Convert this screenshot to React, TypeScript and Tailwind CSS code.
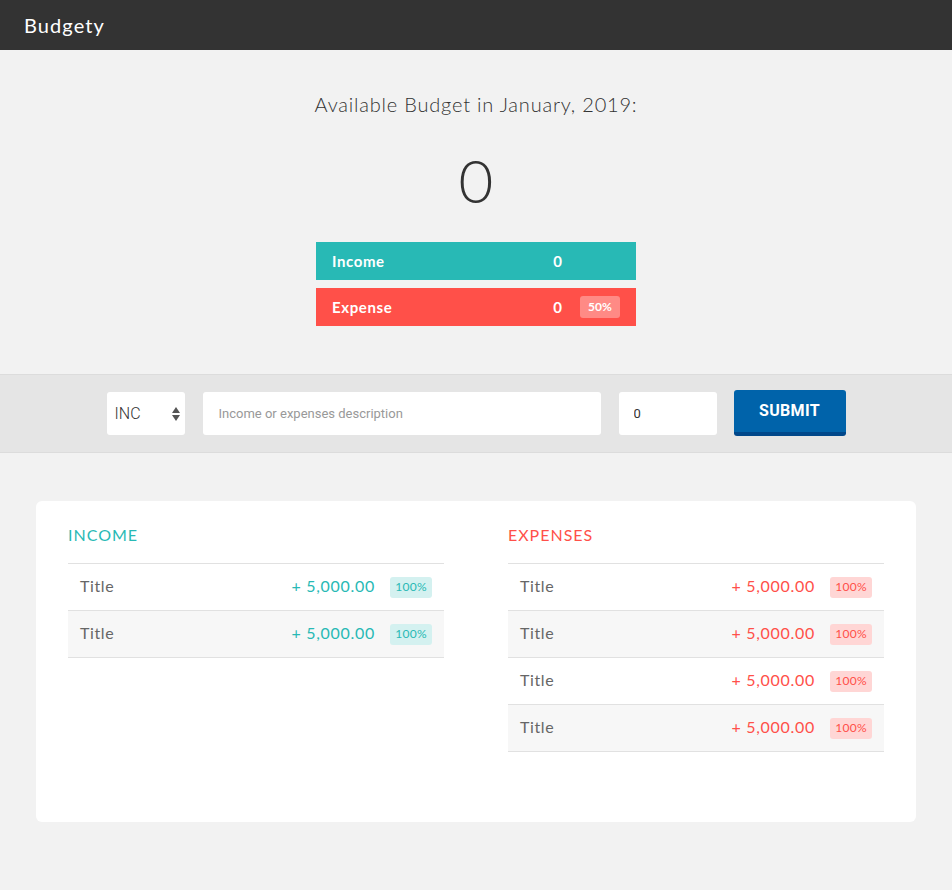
import React, { useState } from "react"

type Item = { title: string; value: string; pct: string }

const incomes: Item[] = [
  { title: "Title", value: "+ 5,000.00", pct: "100%" },
  { title: "Title", value: "+ 5,000.00", pct: "100%" },
]

const expenses: Item[] = [
  { title: "Title", value: "+ 5,000.00", pct: "100%" },
  { title: "Title", value: "+ 5,000.00", pct: "100%" },
  { title: "Title", value: "+ 5,000.00", pct: "100%" },
  { title: "Title", value: "+ 5,000.00", pct: "100%" },
]

function List({
  heading,
  items,
  kind,
}: {
  heading: string
  items: Item[]
  kind: "inc" | "exp"
}) {
  const isInc = kind === "inc"
  return (
    <div className="w-[376px]">
      {/* Column heading */}
      <h2
        className={`h-5 text-[16px] leading-5 tracking-[1px] mb-[18px] ${
          isInc ? "text-[#28b9b5]" : "text-[#ff5049]"
        }`}
      >
        {heading}
      </h2>
      <div className="border-t border-[#e1e1e1]">
        {items.map((item, i) => (
          <div
            key={i}
            className={`h-[47px] flex items-center px-3 border-b border-[#e1e1e1] ${
              i % 2 === 1 ? "bg-[#f7f7f7]" : "bg-white"
            }`}
          >
            <span className="flex-1 text-[16px] text-[#666] tracking-[0.6px] -mt-[2px]">
              {item.title}
            </span>
            <span
              className={`text-[16px] tracking-[0.7px] -mt-[2px] ${
                isInc ? "text-[#28b9b5]" : "text-[#ff5049]"
              }`}
            >
              {item.value}
            </span>
            <span
              className={`ml-[15px] w-[42px] h-[21px] rounded-[3px] flex items-center justify-center text-[12px] tracking-[0.3px] ${
                isInc
                  ? "text-[#28b9b5] bg-[#d4f1f0]"
                  : "text-[#ff5049] bg-[#ffd6d5]"
              }`}
            >
              {item.pct}
            </span>
          </div>
        ))}
      </div>
    </div>
  )
}

export default function App() {
  const [type, setType] = useState("inc")
  const [desc, setDesc] = useState("")
  const [value, setValue] = useState("0")

  return (
    <div
      className="min-h-screen bg-[#f2f2f2] text-[#333]"
      style={{ fontFamily: "Lato, 'Open Sans', sans-serif" }}
    >
      {/* Header */}
      <header className="h-[50px] bg-[#333] flex items-center px-6">
        <span className="text-white text-[20px] tracking-[1.1px]">Budgety</span>
      </header>

      {/* Budget overview */}
      <section className="flex flex-col items-center pt-[40px] pb-[48px]">
        <div className="text-[20px] leading-7 font-light tracking-[0.8px]">
          Available Budget in January, 2019:
        </div>
        <div className="mt-[32px] text-[60px] leading-none font-light">0</div>
        <div className="mt-[32px] w-[320px] flex flex-col gap-2">
          <div className="h-[38px] bg-[#28b9b5] text-white flex items-center pl-4 pr-4">
            <span className="flex-1 text-[15px] font-bold tracking-[0.6px]">Income</span>
            <span className="text-[15px] font-bold">0</span>
            <span className="ml-[18px] w-[40px]"></span>
          </div>
          <div className="h-[38px] bg-[#ff5049] text-white flex items-center pl-4 pr-4">
            <span className="flex-1 text-[15px] font-bold tracking-[0.6px]">Expense</span>
            <span className="text-[15px] font-bold">0</span>
            <span className="ml-[18px] w-[40px] h-[22px] rounded-[3px] bg-[#ff8a85] flex items-center justify-center text-[12px] font-bold">
              50%
            </span>
          </div>
        </div>
      </section>

      {/* Add form */}
      <section
        className="h-[79px] bg-[#e5e5e5] border-t border-b border-[#dcdcdc] flex items-center justify-center"
        style={{ fontFamily: "Roboto, 'Liberation Sans', sans-serif" }}
      >
        <div className="relative w-[78px] h-[43px]">
          <select
            value={type}
            onChange={(e) => setType(e.target.value)}
            className="appearance-none w-full h-full bg-white rounded-[3px] pl-2 text-[16px] font-light text-[#333] outline-none"
          >
            <option value="inc">INC</option>
            <option value="exp">EXP</option>
          </select>
          <svg
            className="absolute right-[5px] top-[15px] pointer-events-none"
            width="8"
            height="14"
            viewBox="0 0 8 14"
          >
            <path d="M4 0 L8 6 L0 6 Z" fill="#555" />
            <path d="M4 14 L8 8 L0 8 Z" fill="#555" />
          </svg>
        </div>
        <input
          value={desc}
          onChange={(e) => setDesc(e.target.value)}
          placeholder="Income or expenses description"
          className="ml-[18px] w-[398px] h-[43px] bg-white rounded-[3px] px-4 text-[13px] text-[#333] placeholder:text-[#999] outline-none"
        />
        <input
          value={value}
          onChange={(e) => setValue(e.target.value)}
          className="ml-[18px] w-[98px] h-[43px] bg-white rounded-[3px] px-[15px] text-[13px] text-[#333] outline-none"
        />
        <button className="ml-[17px] -mt-[1px] w-[112px] h-[46px] bg-[#0063aa] border-b-[4px] border-[#00478a] rounded-[3px] text-white text-[16px] font-bold tracking-[0.3px]">
          SUBMIT
        </button>
      </section>

      {/* Lists */}
      <section className="pt-12 px-9 pb-[69px]">
        <div className="bg-white rounded-[6px] px-8 pt-6 pb-[70px] flex justify-between">
          <List heading="INCOME" items={incomes} kind="inc" />
          <List heading="EXPENSES" items={expenses} kind="exp" />
        </div>
      </section>
    </div>
  )
}
